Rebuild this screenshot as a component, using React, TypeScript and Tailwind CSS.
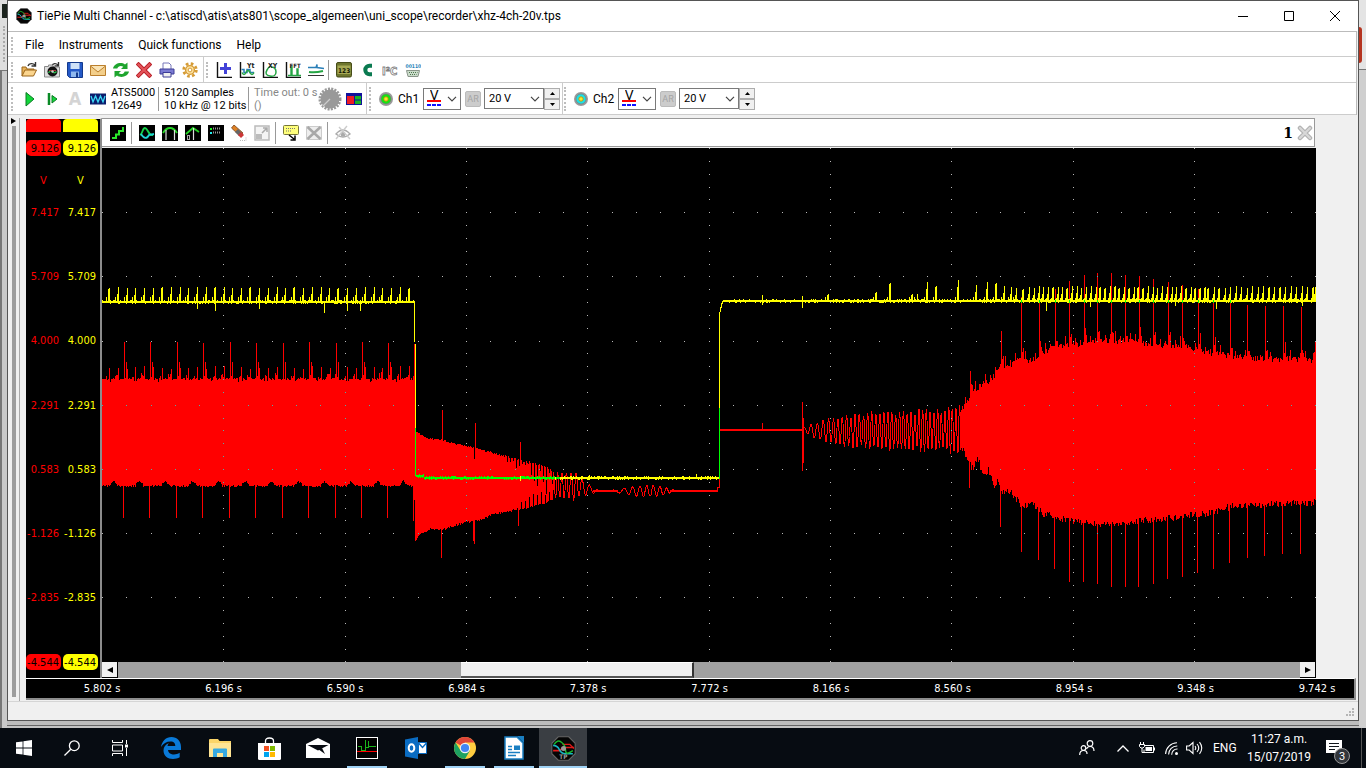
import type { ReactNode } from 'react';

/* ---------- waveform data ---------- */

const X0 = 102;
const X1 = 1316;
const Y0 = 148;
const Y1 = 662;

type Pt = [number, number];

const noise = (i: number) => {
  const v = Math.sin(i * 12.9898 + 4.1) * 43758.5453;
  return v - Math.floor(v);
};

const lerp = (pts: Pt[], x: number) => {
  if (x <= pts[0][0]) return pts[0][1];
  for (let i = 1; i < pts.length; i++) {
    if (x <= pts[i][0]) {
      const [ax, ay] = pts[i - 1];
      const [bx, by] = pts[i];
      return ay + ((by - ay) * (x - ax)) / (bx - ax);
    }
  }
  return pts[pts.length - 1][1];
};

const decayTop: Pt[] = [[415, 432], [427, 438], [442, 440], [455, 444], [467, 446], [482, 450], [500, 455], [520, 460], [533, 463], [548, 468], [554, 472]];
const decayBottom: Pt[] = [[415, 541], [420, 534], [430, 529], [442, 530], [453, 526], [467, 522], [480, 520], [493, 514], [510, 511], [520, 510], [533, 506], [547, 503], [554, 498]];
const burstTop: Pt[] = [[960, 413], [967, 402], [973, 393], [982, 385], [990, 382], [997, 372], [1003, 366], [1010, 367], [1020, 359], [1030, 362], [1040, 355], [1050, 350], [1060, 347], [1077, 345], [1100, 340], [1117, 342], [1140, 343], [1160, 347], [1180, 346], [1207, 354], [1233, 357], [1260, 360], [1287, 360], [1312, 361], [1315, 347]];
const burstBottom: Pt[] = [[960, 443], [967, 460], [973, 470], [977, 457], [983, 478], [988, 470], [995, 488], [998, 480], [1002, 493], [1006, 490], [1013, 496], [1023, 508], [1030, 503], [1043, 514], [1057, 518], [1073, 522], [1097, 524], [1113, 525], [1137, 521], [1167, 519], [1200, 515], [1233, 507], [1260, 505], [1315, 503]];

const burstUp: Pt[] = [[970, 371], [1001, 331], [1021, 297], [1039, 299], [1055, 289], [1069, 281], [1084, 275], [1097, 273], [1111, 273], [1125, 275], [1139, 276], [1153, 279], [1168, 282], [1182, 285], [1198, 289], [1213, 295], [1230, 298], [1247, 305], [1265, 306], [1283, 306], [1301, 307]];
const burstDown: Pt[] = [[969, 488], [1000, 527], [1021, 552], [1038, 560], [1054, 569], [1069, 582], [1083, 582], [1097, 584], [1111, 587], [1125, 587], [1138, 587], [1153, 584], [1167, 579], [1182, 577], [1197, 573], [1213, 569], [1229, 563], [1247, 558], [1264, 556], [1282, 554], [1300, 554]];

const top = new Map<number, number>();
const bottom = new Map<number, number>();

for (let x = X0; x < 415; x++) {
  const big = (((x - 123.5) % 26.45) + 26.45) % 26.45;
  const small = (((x - 108.5) % 8.82) + 8.82) % 8.82;
  let t = 378 + Math.round(noise(x) * 2);
  let b = 485 + Math.round(noise(x + 700) * 2);
  if (big > 12 && big < 19) b -= 5 - Math.round(Math.abs(big - 15.5));
  if (small < 1) t = 366 + Math.round(noise(x + 90) * 3);
  else if (small > 5.8) t -= Math.round(noise(x + 31) * 6);
  if (big > 8 && big < 13 && small >= 1) t += 2;
  if (big < 1) t = 342 + Math.round(noise(x + 5));
  else if (big >= 2 && big < 3) t = 362;
  if (big >= 25.4) b = 518;
  top.set(x, t);
  bottom.set(x, b);
}
top.set(413, 376);
bottom.set(413, 521);
top.set(414, 344);
bottom.set(414, 500);

for (let x = 415; x < 554; x++) {
  let t = lerp(decayTop, x) + noise(x) * 2 - 1;
  let b = lerp(decayBottom, x) + noise(x + 40) * 2 - 1;
  if (x > 500 && x % 3 === 0) t += noise(x + 3) * (x - 496) * 0.6;
  if (x > 505 && x % 4 === 1) b -= noise(x + 9) * (x - 500) * 0.5;
  top.set(x, Math.round(t));
  bottom.set(x, Math.round(b));
}
top.set(442, 410);
bottom.set(441, 558);
top.set(474, 459);
top.set(475, 423);
bottom.set(473, 541);
bottom.set(474, 544);
top.set(520, 442);
bottom.set(518, 526);

const upSpikes = new Map(burstUp);
const downSpikes = new Map(burstDown);
for (let x = 961; x < X1; x++) {
  const near = burstUp.some(([s]) => x - s > 0 && x - s < 3);
  const pulse = x % 5 === 0 ? 3 + noise(x + 8) * 10 : noise(x) * 6;
  const t = lerp(burstTop, x) - pulse - (near ? 8 : 0) + 2;
  const b = lerp(burstBottom, x) + noise(x + 300) * 7 - 4;
  top.set(x, Math.round(upSpikes.get(x) ?? t));
  bottom.set(x, Math.round(downSpikes.get(x) ?? b));
}

const redFill = [...top.keys()].map((x) => `M${x + 0.5} ${top.get(x)}V${bottom.get(x)}`).join('');

const chirp = (from: number, to: number, step: number, centre: Pt[], amp: Pt[], period: Pt[], wobble: number) => {
  let phase = 0;
  let d = '';
  for (let x = from; x <= to; x += step) {
    phase += (2 * Math.PI * step) / lerp(period, x);
    const jitter = 1 - wobble + noise(Math.floor(x / 3)) * wobble * 2;
    const y = lerp(centre, x) - Math.sin(phase) * lerp(amp, x) * jitter;
    d += `${d ? 'L' : 'M'}${x} ${y.toFixed(1)}`;
  }
  return d;
};

const decayTail = chirp(553, 598, 0.5, [[553, 485], [580, 486], [590, 490]], [[553, 14], [576, 13], [584, 7], [592, 4], [598, 0.5]], [[553, 4], [575, 5], [598, 10]], 0.1);
const ripple = chirp(610, 676, 0.5, [[598, 491], [719, 491]], [[610, 0.5], [618, 2], [630, 4], [640, 5.5], [656, 5.5], [664, 4], [676, 0.6]], [[610, 14], [630, 8], [645, 6.6]], 0.1);
const rise = 'M717.5 491V487H719.5V430.5H802';
const oscillation = chirp(803, 961, 0.5, [[803, 430], [836, 431], [961, 430]], [[803, 2], [810, 5], [820, 9], [836, 13], [870, 17], [900, 18], [943, 21], [961, 22]], [[803, 7], [820, 6], [836, 4.4], [880, 4], [961, 3.6]], 0.18);

const yellowPeaks: Pt[] = [[828, 294], [876, 292], [890, 283], [912, 294], [917, 294], [927, 282], [936, 286], [958, 280], [976, 285], [987, 282], [996, 283], [1004, 286], [1011, 287], [1016, 288], [1023, 289]];
for (let p = 109.5; p < 412; p += 8.82) yellowPeaks.push([Math.floor(p), 287 + Math.round(noise(p))]);
for (let p = 1029; p < 1207; p += 4.75) yellowPeaks.push([Math.round(p), 286 + Math.round(noise(p) * 2)]);
for (let p = 1208; p < X1; p += 5.5) yellowPeaks.push([Math.round(p), 286 + Math.round(noise(p) * 2)]);
yellowPeaks.push([1315, 287]);

const peakPath = ([x, y]: Pt) => {
  const shoulder = noise(x) > 0.75 ? 1 : 7;
  const foot = x < 1023 ? `M${x - 2.5} 297V301` : `M${x - 1.5} 298V301`;
  return `M${x + 0.5} ${y}V301M${x - 0.5} ${y + shoulder}V301${foot}`;
};

const flatTrace = (from: number, to: number, y: number, amount: number) => {
  let d = '';
  for (let x = from; x < to; x++) {
    const up = noise(x * 3) > 0.72 ? amount : 0;
    const down = noise(x * 7) > 0.75 ? amount : 0;
    d += `M${x + 0.5} ${y - 1 - up}V${y + 1 + down}`;
  }
  return d;
};

const yellowTrace =
  flatTrace(102, 415, 302, 1) +
  flatTrace(724, 1316, 301, 1) +
  yellowPeaks.map(peakPath).join('') +
  [[197, 309], [215, 311], [259, 309], [324, 313], [347, 311], [360, 311], [762, 305], [802, 308], [1046, 311], [1090, 307], [1175, 306], [1216, 309], [1302, 306]]
    .map(([x, y]) => `M${x + 0.5} 301V${y}`)
    .join('') +
  'M762.5 295V302M802.5 296V302M414.5 301V342M415.5 344V428M719.5 408V312M720.5 312V307M721.5 308V303M722.5 304V301M723.5 302V300' +
  flatTrace(540, 719, 478, 1) +
  'M589.5 475V480M696.5 474V479';
const greenTrace = flatTrace(416, 424, 476, 1) + flatTrace(424, 560, 478, 1) + 'M415.5 428V476M719.5 408V479';
const crossings = burstUp.filter(([, y]) => y < 300).map(([x]) => `M${x + 0.5} 300V303`).join('');

const dots: { x: number; y: number; hot: boolean }[] = [];
const addDot = (x: number, y: number) => {
  const t = top.get(x);
  const b = bottom.get(x);
  dots.push({ x, y, hot: t !== undefined && b !== undefined && y > t && y < b });
};
for (let r = 1; r < 8; r++) for (let c = 0; c <= 50; c++) addDot(Math.min(X1 - 1, Math.round(X0 + c * 24.27)), Math.round(Y0 + r * 64.2));
for (let c = 1; c < 10; c++) for (let r = 0; r <= 40; r++) addDot(Math.round(X0 + c * 121.35), Math.min(Y1 - 1, Math.round(Y0 + r * 12.84)));
const dotPath = (hot: boolean) => dots.filter((d) => d.hot === hot).map((d) => `M${d.x} ${d.y}h1v1h-1z`).join('');

function Plot() {
  return (
    <svg role="img" aria-label="Recorded signals" viewBox="102 148 1214 514" preserveAspectRatio="none" className="min-h-0 w-full flex-1 bg-black" fill="none" shapeRendering="crispEdges">
      <path d={redFill} stroke="#f00" />
      <path d={decayTail + ripple} stroke="#f00" />
      <path d={rise} stroke="#f00" />
      <path d="M720 430H802M593 491H618M670 491H718" stroke="#f00" strokeWidth="2" />
      <path d="M762.5 423V430M802.5 402V471M803.5 418V463" stroke="#f00" />
      <path d={oscillation} stroke="#f00" />
      <path d={yellowTrace} stroke="#ff0" />
      <path d={greenTrace + crossings} stroke="#0f0" />
      <path d="M520.5 476V481M555.5 477V480M562.5 477V480" stroke="#ff0" />
      <path d={dotPath(false)} fill="#b8b8b8" />
      <path d={dotPath(true)} fill="#4fb0a8" />
    </svg>
  );
}

/* ---------- icons ---------- */

function Icon({ children, size = 16, label }: { children: ReactNode; size?: number; label?: string }) {
  return (
    <svg width={size} height={size} viewBox="0 0 16 16" fill="none" aria-label={label} className="shrink-0">
      {children}
    </svg>
  );
}

const T = ({ x, y, s, f, children }: { x: number; y: number; s: number; f: string; children: string }) => (
  <text x={x} y={y} fontSize={s} fill={f} fontWeight="700" fontFamily='"DejaVu Sans Condensed", "DejaVu Sans", sans-serif'>
    {children}
  </text>
);

const Tp = ({ size = 16, caption = '' }: { size?: number; caption?: string }) => (
  <svg width={size} height={size} viewBox="0 0 24 24" fill="none" className="shrink-0">
    <path d="M7 .8h10L23.2 7v10L17 23.2H7L.8 17V7z" fill="#050505" stroke="#666" />
    <path d="M2 14h6l4-3h10" stroke="#e01818" strokeWidth="1.6" />
    <path d="M11 8h7l4 4" stroke="#e01818" strokeWidth="1.3" />
    <path d="M2 9q4 0 6 4t6 4h7" stroke="#19b6c4" strokeWidth="1.5" />
    <path d="M3 8q3-5 7-2t4 8 7 0" stroke="#1bb52c" strokeWidth="1.4" />
    <circle cx="12" cy="12" r="2.4" fill="#999" />
    {caption && <T x={8} y={22.5} s={6} f="#999">{caption}</T>}
  </svg>
);

const axes = <path d="M1.5 0V15.5H16" stroke="#111" strokeWidth="1.4" />;

const fileIcons: [string, ReactNode][] = [
  ['Open', <><path d="M7 4c1-3 5-3 7-1M14.5 0v4h-4" stroke="#333" strokeWidth="1.4" /><path d="M1 14V5h4l1 2h7v2" fill="#e9b45a" stroke="#9a6418" /><path d="M1 14l3-6h11.500l-3 6z" fill="#fbd58e" stroke="#9a6418" /></>],
  ['Snapshot', <><path d="M8 4c1-3 4-3 6-1M14.500 0v4h-4" stroke="#333" strokeWidth="1.4" /><path d="M.5 4.500h4v-1.500h4l1 2h6v10H.5z" fill="#ddd" stroke="#888" /><circle cx="8.500" cy="9.500" r="5" fill="#111" /><path d="M4.500 11q2-4 4-1.500t4 0" stroke="#2ab54a" strokeWidth="1.3" /><path d="M5 8.500h7" stroke="#a33" /><circle cx="8.500" cy="9.500" r="1.200" fill="#ccc" /></>],
  ['Save', <><path d="M.5.5h15v15h-13l-2-2z" fill="#2459c7" stroke="#143a8c" /><path d="M3.500 1h9v6h-9z" fill="#cfe2f8" /><path d="M4 15V9.500h8V15" fill="#8fb8ee" /><path d="M9 10.500h2V15H9z" fill="#133a8d" /></>],
  ['Mail', <><path d="M.5 3.500h15v10H.5z" fill="#f3cf8b" stroke="#bb7f2d" /><path d="M.5 4l7.500 6 7.500-6" stroke="#bb7f2d" fill="#fae4b5" /></>],
  ['Refresh', <><path d="M0 6.500C1 1.500 8-.5 12 2.500L14.500.500V7H8l2.300-2.300C8 3.200 5 4 4.300 6.500zM16 9.500c-1 5-8 7-12 4L1.500 15.500V9H8l-2.300 2.300c2.300 1.500 5.300.7 6-1.800z" fill="#1ea52e" /></>],
  ['Delete', <><path d="M2.500 2.500l11 11M13.500 2.500l-11 11" stroke="#b81e26" strokeWidth="4" strokeLinecap="square" /><path d="M2.500 2.500l11 11M13.500 2.500l-11 11" stroke="#e4545a" strokeWidth="2.200" strokeLinecap="square" /></>],
  ['Print', <><path d="M4 7V1h6l2 2v4" fill="#fff" stroke="#7878ba" /><path d="M1 7h14v5H1z" fill="#7a7ad2" stroke="#3c3c96" /><path d="M4 10.500h8v4.500H4z" fill="#eee" stroke="#3c3c96" /></>],
  ['Settings', <><circle cx="8" cy="8" r="6.300" stroke="#d59b35" strokeWidth="2.800" strokeDasharray="2.600 2.350" /><circle cx="8" cy="8" r="4.400" fill="#ffe3a0" stroke="#d59b35" strokeWidth="1.400" /><circle cx="8" cy="8" r="1.900" fill="#fff" stroke="#d59b35" /></>],
];

const graphIcons: [string, ReactNode][] = [
  ['New graph', <>{axes}<path d="M9.500 1v11M4 6.500h11" stroke="#4343d8" strokeWidth="3" /></>],
  ['Yt graph', <>{axes}<path d="M2.500 7.500H5v3h3v-3h3v3h4" stroke="#2a7fb8" strokeWidth="1.500" /><path d="M3 10.500q2 4 4 0t4 0 4 0" stroke="#25a544" strokeWidth="1.600" /><T x={8} y={5.5} s={7} f="#222">Yt</T></>],
  ['XY graph', <>{axes}<path d="M9 5q5 0 5 5t-6 4-3-6 4-3" stroke="#25a544" strokeWidth="1.500" /><T x={6} y={5.5} s={7} f="#222">XY</T></>],
  ['FFT graph', <>{axes}<path d="M3 13.500h3V5h1v8.500h5V7h1v6.500h3" stroke="#25a544" strokeWidth="1.400" /><T x={4.5} y={5.5} s={6} f="#222">FFT</T></>],
  ['Trend', <><path d="M0 5.500h8l1-3v3l7 1" stroke="#2a7fb8" strokeWidth="1.500" /><path d="M1 10q6 1 14-1" stroke="#25a544" strokeWidth="2" /><path d="M0 13.500h16" stroke="#333" /></>],
];

const toolIcons: [string, ReactNode][] = [
  ['Meter', <><rect x=".5" y=".5" width="15" height="14.500" rx="1.500" fill="#6e762e" stroke="#464c18" /><path d="M1.500 3.500h13v8.500h-13z" fill="#a7aa55" /><T x={2} y={10.5} s={6.5} f="#171a05">123</T></>],
  ['CAN', <path d="M13 3.800h-2.500a4.200 4.200 0 0 0 0 8.400H13" stroke="#0a7a50" strokeWidth="4" />],
  ['I2C', <text x="0" y="13" fontSize="11" fill="#fff" stroke="#808080" strokeWidth=".8" fontWeight="700" fontFamily='"DejaVu Sans Condensed", sans-serif'>I²C</text>],
  ['Serial', <><T x={0.5} y={5.5} s={5} f="#2a86bb">00110</T><path d="M1.500 8.500h13l-1.500 6H3z" fill="#cbdccb" stroke="#8a958a" /><path d="M4 10.500h8.500M5 12.500h6.500" stroke="#4c764c" strokeDasharray="1 1" /></>],
];

const plotTools: { name: string; node: ReactNode; sep?: boolean }[] = [
  { name: 'Step', sep: true, node: <><rect width="16" height="16" fill="#000" /><path d="M2 13h4v-3.500h3V6h4V2" stroke="#2be52b" strokeWidth="2" /></> },
  { name: 'Interpolate', node: <><rect width="16" height="16" fill="#000" /><path d="M1 10c3-1 2-7 5-7s3 8 8 7" stroke="#16d24a" strokeWidth="1.800" /><path d="M2 9c3 5 6 5 8 1l5-1" stroke="#20d4d4" strokeWidth="1.800" /></> },
  { name: 'Window', node: <><rect width="16" height="16" fill="#000" /><path d="M1 8q3-5 7-5t7 5" stroke="#25d525" strokeWidth="1.800" /><path d="M4 5v10M12.500 5v10" stroke="#ddd" strokeWidth="1.200" /></> },
  { name: 'Cursor', node: <><rect width="16" height="16" fill="#000" /><path d="M1 9l7-6 6 4" stroke="#25d525" strokeWidth="1.800" /><path d="M8.500 3v12" stroke="#ddd" strokeWidth="1.200" /><rect x="2.500" y="10.500" width="2" height="4" stroke="#aaa" /></> },
  { name: 'Legend', node: <><rect width="16" height="16" fill="#000" /><path d="M2 3h2v2H2z" fill="#2e2" /><path d="M2 7h2v2H2z" fill="#2ee" /><path d="M5 3.500h8M5 7.500h8" stroke="#999" strokeWidth="2" strokeDasharray="1 1" /></> },
  { name: 'Erase', node: <><path d="M3 0l9 8-3 3L.5 3z" fill="#df8123" stroke="#74421a" strokeWidth=".8" /><path d="M7 4l4 4-3 3-4-4z" fill="#666" /><path d="M10 7l3 3-3 3-3-3z" fill="#cc3636" /><path d="M9 15.500h6v-4" stroke="#bbb" strokeDasharray="1 1" /></> },
  { name: 'Resize', sep: true, node: <><path d="M1 1h14v14H1z" fill="#f4f4f4" stroke="#bbb" strokeWidth="1.500" /><path d="M2 9h6v5H2z" fill="#bbb" /><path d="M8 8l4.500-4.500M9 3h4v4" stroke="#aaa" strokeWidth="1.500" /></> },
  { name: 'Comment', node: <><rect x=".5" y=".5" width="15" height="9" rx="1" fill="#ffff7a" stroke="#77773a" /><path d="M3 3.500h10M3 6h5" stroke="#777" strokeDasharray="1 1" /><path d="M6 10l5 4M12 10.500V15H7.500" stroke="#000" strokeWidth="1.500" /></> },
  { name: 'Clear', sep: true, node: <><path d="M.5 1.500h15v13H.5z" fill="#eee" stroke="#ccc" /><path d="M1.500 2l13 12M14.500 2l-13 12" stroke="#a8a8a8" strokeWidth="2.500" /></> },
  { name: 'Visibility', node: <><path d="M1 9q7-8 14 0-7 6-14 0z" stroke="#aaa" strokeWidth="1.400" /><circle cx="8" cy="9" r="2.500" fill="#aaa" /><path d="M1 14L12 1M4 2l11 12" stroke="#ccc" strokeWidth="1.400" /></> },
];

/* ---------- small pieces ---------- */

const Grip = ({ className = 'h-4' }: { className?: string }) => (
  <span className={`w-0 shrink-0 border-l-2 border-dotted border-[#bdbdbd] ${className}`} />
);

const IconRow = ({ items }: { items: [string, ReactNode][] }) => (
  <div className="flex items-center gap-[7px]">
    {items.map(([name, node]) => (
      <button key={name} aria-label={name}>
        <Icon>{node}</Icon>
      </button>
    ))}
  </div>
);

const Chevron = () => (
  <svg width="10" height="6" viewBox="0 0 10 6" fill="none" className="pointer-events-none absolute top-2 right-1">
    <path d="M1 .8l4 4 4-4" stroke="#444" strokeWidth="1.200" />
  </svg>
);

function Channel({ name, led }: { name: string; led: string }) {
  return (
    <div className="flex items-center">
      <Icon label={`${name} status`}>
        <circle cx="8" cy="8" r="7" fill="#999" />
        <circle cx="8" cy="8" r="5" fill={led} stroke="#777" strokeWidth=".6" />
        <circle cx="8" cy="8" r="2.200" fill="#ee3" stroke="#c80" strokeWidth=".8" />
      </Icon>
      <span className="ml-1 w-[25px] text-xs">{name}</span>
      <div className="relative">
        <select aria-label={`${name} coupling`} className='block h-[22px] w-[38px] appearance-none border border-[#7a7a7a] bg-white pb-2 pl-1.5 font-["Noto_Sans"] text-sm leading-3 text-black'>
          <option>V</option>
        </select>
        <svg width="14" height="6" viewBox="0 0 14 6" className="pointer-events-none absolute bottom-1 left-1" shapeRendering="crispEdges">
          <path d="M0 1h14" stroke="#f00" strokeWidth="2" />
          <path d="M0 5h14" stroke="#11f" strokeWidth="2" strokeDasharray="4 1" />
        </svg>
        <Chevron />
      </div>
      <button aria-label={`${name} auto range`} className="mx-1 h-4 w-4 rounded-xs border border-[#bbb] bg-[#ccc] text-[9px] leading-3 text-[#a4a4a4]">
        <span className="flex justify-center">AR</span>
      </button>
      <div className="relative ml-[-1px]">
        <select aria-label={`${name} range`} className="block h-[21px] w-[60px] appearance-none border border-[#7a7a7a] bg-white pl-1 text-[11px] text-black">
          <option>20 V</option>
        </select>
        <Chevron />
      </div>
      <div className="flex flex-col">
        {['up', 'down'].map((dir) => (
          <button key={dir} aria-label={`${name} range ${dir}`} className="flex h-[11px] w-4 items-center justify-center border border-[#adadad] bg-[#f0f0f0]">
            <svg width="5" height="3" viewBox="0 0 5 3">
              <path d={dir === 'up' ? 'M0 3L2.500 0 5 3z' : 'M0 0h5L2.500 3z'} fill="#000" />
            </svg>
          </button>
        ))}
      </div>
    </div>
  );
}

const levels = ['9.126', '7.417', '5.709', '4.000', '2.291', '0.583', '-1.126', '-2.835', '-4.544'];
const times = ['5.802', '6.196', '6.590', '6.984', '7.378', '7.772', '8.166', '8.560', '8.954', '9.348', '9.742'];

function Scale({ head, text, pill }: { head: string; text: string; pill: string }) {
  return (
    <div className="flex flex-1 flex-col">
      <div className={`h-[13px] rounded-t-sm ${head}`} />
      {levels.flatMap((v, i) => {
        const edge = i === 0 || i === levels.length - 1;
        const row = (
          <div key={v} className={`flex flex-1 items-center justify-end ${text}`}>
            <span className={edge ? `flex h-4 w-full items-center justify-end rounded-[5px] pr-0.5 ${pill}` : 'pr-0.5'}>{v}</span>
          </div>
        );
        const gap = (
          <div key={`${v}-gap`} className={`flex flex-1 items-center justify-center ${text}`}>
            {i === 0 ? 'V' : ''}
          </div>
        );
        return i === levels.length - 1 ? [row] : [row, gap];
      })}
    </div>
  );
}

/* ---------- task bar ---------- */

const taskItems: { name: string; node: ReactNode; open?: boolean; active?: boolean }[] = [
  { name: 'Edge', node: <svg width="20" height="22" viewBox="0 0 20 22"><path d="M0 10C1 4 5 0 10.500 0 16 0 20 4 20 10v3H7c.3 3 3 4.500 6 4.500 2 0 4-.6 5.700-1.700v4.500C17 21.500 14.500 22 12 22 6.500 22 2.500 18.500 2.500 13.500 2.500 10 4.500 7.500 8 6 7 7 6.500 8.500 6.500 9h7.800C14.300 6.500 13 4.500 9.500 4.500 5.500 4.500 2 6.500 0 10z" fill="#0a7ad8" /></svg> },
  { name: 'File Explorer', node: <svg width="22" height="18" viewBox="0 0 22 18"><path d="M0 1q0-1 1-1h8l1.500 2H22v16H0z" fill="#fbd568" /><path d="M0 4h22v14H0z" fill="#ffe594" /><path d="M4 10.500q0-1 1-1h12q1 0 1 1V18h-4v-4H8v4H4z" fill="#36a9e1" /></svg> },
  { name: 'Store', node: <svg width="23" height="23" viewBox="0 0 23 23"><path d="M7.500 7V4q0-3 4-3t4 3v3" fill="none" stroke="#fff" strokeWidth="1.300" /><path d="M0 6h23v15.500q0 1.500-1.500 1.500h-20Q0 23 0 21.500z" fill="#fff" /><path d="M6 9h5v5H6z" fill="#f25022" /><path d="M12 9h5v5h-5z" fill="#7fba00" /><path d="M6 15h5v5H6z" fill="#00a4ef" /><path d="M12 15h5v5h-5z" fill="#ffb900" /></svg> },
  { name: 'Mail', node: <svg width="24" height="20" viewBox="0 0 24 20"><path d="M0 6L12 0l12 6v14H0z" fill="#fff" /><path d="M1.500 7h21L12 12.500z" fill="#080c12" /><path d="M12 11l7 5-3-6z" fill="#080c12" /></svg> },
  { name: 'Scope', open: true, node: <svg width="22" height="22" viewBox="0 0 22 22" shapeRendering="crispEdges"><path d="M.5.5h21v21H.5z" fill="#000" stroke="#fff" /><path d="M1 14.500h20" stroke="#f00" /><path d="M2 9.500h3.500v3.500h4V3M12.500 4v6.500h-3M12 9.500h8" stroke="#1bb51b" fill="none" /></svg> },
  { name: 'Outlook', node: <svg width="22" height="22" viewBox="0 0 22 22"><path d="M0 2.500L13 0v22L0 19.500z" fill="#0a6cc2" /><ellipse cx="6.500" cy="11" rx="2.800" ry="3.700" fill="none" stroke="#fff" strokeWidth="2" /><path d="M13.500 5.500h8v11h-8z" fill="#fff" stroke="#0a6cc2" /><path d="M13.500 6l4 4.500 4-4.500" fill="none" stroke="#0a6cc2" strokeWidth="1.400" /></svg> },
  { name: 'Chrome', open: true, node: <svg width="22" height="22" viewBox="0 0 22 22"><circle cx="11" cy="11" r="11" fill="#ffcd40" /><path d="M11 11L1.500 5.500A11 11 0 0 1 20.500 5.500H11z" fill="#e0473a" /><path d="M1.500 5.500A11 11 0 0 0 11 22l4.800-8.300L11 11 6.500 13.500z" fill="#1da261" /><circle cx="11" cy="11" r="5.200" fill="#f2f2f2" /><circle cx="11" cy="11" r="4.100" fill="#4285f4" /></svg> },
  { name: 'Writer', open: true, node: <svg width="20" height="24" viewBox="0 0 20 24"><path d="M1 1h12l6 6v16H1z" fill="#fff" stroke="#1a7fc2" strokeWidth="1.500" /><path d="M13 0h7v7z" fill="#1a7fc2" /><path d="M4 10.500h4M4 13.500h4M4 16.500h12M4 19.500h8" stroke="#1a7fc2" strokeWidth="1.500" /><path d="M10 9.500h6v4.500h-6z" fill="#1a7fc2" /></svg> },
  { name: 'TiePie', open: true, active: true, node: <Tp size={25} caption="TP" /> },
];

function Taskbar() {
  return (
    <footer className="flex h-10 shrink-0 items-stretch bg-[#070c12] text-white">
      <button aria-label="Start" className="flex w-12 items-center justify-center">
        <svg width="16" height="16" viewBox="0 0 16 16" fill="#fff"><path d="M0 2.300L6.600 1.400V7.600H0zM7.400 1.300L16 0v7.600H7.400zM0 8.400h6.600v6.200L0 13.700zM7.400 8.400H16V16l-8.600-1.300z" /></svg>
      </button>
      <button aria-label="Search" className="flex w-12 items-center justify-center">
        <svg width="16" height="16" viewBox="0 0 16 16" fill="none" stroke="#fff" strokeWidth="1.300"><circle cx="10.300" cy="5.700" r="4.900" /><path d="M6.800 9.200L.5 15.500" /></svg>
      </button>
      <button aria-label="Task view" className="flex w-12 items-center justify-center">
        <svg width="16" height="16" viewBox="0 0 16 16" fill="none" stroke="#fff"><path d="M.5 0v2.500h10V0M.5 16v-2.500h10V16M.5 5h10v6H.5zM14.500 0v4M14.500 8v8" /><path d="M13 4.500h3v3h-3z" fill="#fff" stroke="none" /></svg>
      </button>
      <nav className="ml-[3px] flex gap-px">
        {taskItems.map((t) => (
          <button key={t.name} aria-label={t.name} className={`flex w-12 flex-col items-center ${t.active ? 'bg-[#3a3e43]' : ''}`}>
            <span className="flex flex-1 items-center pt-0.5">{t.node}</span>
            <span className={`h-0.5 ${t.active ? 'w-full' : 'w-10'} ${t.open ? 'bg-[#9fd2f5]' : ''}`} />
          </button>
        ))}
      </nav>
      <div className="ml-auto flex items-center">
        <svg width="16" height="16" viewBox="0 0 16 16" fill="none" stroke="#fff" strokeWidth="1.200"><circle cx="11" cy="3.500" r="2.800" /><circle cx="4.500" cy="8" r="2.300" /><path d="M.7 15q0-4.500 3.800-4.500T8 14M7.500 9q1-2.500 3.500-2.500 4 0 4 4.500" /></svg>
        <svg width="12" height="7" viewBox="0 0 12 7" fill="none" stroke="#fff" strokeWidth="1.300" className="ml-[22px]"><path d="M.5 6.500L6 1l5.500 5.500" /></svg>
        <svg width="16" height="12" viewBox="0 0 16 12" fill="none" stroke="#fff" className="ml-2.5"><path d="M5 3.500h9.500v7H5v-3" /><path d="M6.500 5h6.500v4H6.500z" fill="#fff" stroke="none" /><path d="M15.500 5.500v3M1.500 0v2M4.500 0v2M.5 2.500h5v2l-1.500 1.500h-2L.5 4.500zM3 6v4.500h2" /></svg>
        <svg width="13" height="13" viewBox="0 0 13 13" fill="none" stroke="#fff" strokeWidth="1.100" className="ml-2.5"><path d="M.6 12A11.500 11.500 0 0 1 12 .8M3.600 12.500A8.500 8.500 0 0 1 12.300 4M6.700 12.800A5.500 5.500 0 0 1 12.500 7" /><circle cx="11.500" cy="11.500" r="1.500" fill="#fff" stroke="none" /></svg>
        <svg width="17" height="14" viewBox="0 0 17 14" fill="none" stroke="#fff" strokeWidth="1.100" className="ml-2"><path d="M.6 5v4h2.600L7 12.500v-11L3.200 5zM9 5q1.500 2 0 4M11 3q3.500 4 0 8M13.500 1.200q4.500 5.800 0 11.600" /></svg>
        <span className="ml-2.5 w-6 text-xs">ENG</span>
        <div className="ml-2.5 flex w-16 flex-col items-center text-xs leading-[18px] whitespace-nowrap">
          <span>11:27 a.m.</span>
          <span>15/07/2019</span>
        </div>
        <div className="relative ml-[15px] h-4 w-4">
          <svg width="16" height="17" viewBox="0 0 16 17"><path d="M0 0h16v13h-4l-3 3.500V13H0z" fill="#fff" /><path d="M3 3.500h10M3 6.500h10M3 9.500h6" stroke="#10151b" /></svg>
          <span className="absolute top-2 left-2 flex h-4 w-4 items-center justify-center rounded-full border border-[#999] bg-[#32363b] text-[11px] leading-none">3</span>
        </div>
        <span className="ml-[19px] h-10 w-[5px] border-l border-[#555]" />
      </div>
    </footer>
  );
}

/* ---------- page ---------- */

export default function App() {
  return (
    <div className='flex h-screen flex-col bg-[#c4c4c4] font-["Roboto","Open_Sans",sans-serif] text-black'>
      <div className="flex min-h-0 flex-1">
        <div className="flex w-[7px] shrink-0 flex-col">
          <div className="flex h-[70px] flex-col items-end bg-[#dedede] pt-1">
            <span className="h-3.5 w-[5px] bg-[#1c241e]" />
            <span className="mt-2 mr-0.5 h-9 border-l-2 border-dotted border-[#aaa]" />
          </div>
          <div className="flex-1 border-t border-l-2 border-[#777] bg-[#c9c9c9]" />
        </div>

        <div className="flex min-w-0 flex-1 flex-col">
          <main className="flex min-h-0 flex-1 flex-col border border-[#555] bg-[#f0f0f0]">
            <header className="flex h-[30px] shrink-0 items-center bg-white pl-2">
              <Tp />
              <h1 className="ml-[5px] text-xs">TiePie Multi Channel - c:\atiscd\atis\ats801\scope_algemeen\uni_scope\recorder\xhz-4ch-20v.tps</h1>
              <div className="ml-auto flex">
                {['M3 8.500h10', 'M3.500 3.500h9v9h-9z', 'M3 3l10 10M13 3L3 13'].map((d, i) => (
                  <button key={d} aria-label={['Minimize', 'Maximize', 'Close'][i]} className="flex w-[46px] justify-center">
                    <Icon>
                      <path d={d} stroke="#000" />
                    </Icon>
                  </button>
                ))}
              </div>
            </header>

            <div className="mr-px shrink-0 border-t border-r border-[#bbb] bg-white">
              <nav className="flex h-[25px] items-center gap-[15px] border-b border-[#ccc] pt-px pl-[3px] text-xs">
                <div className="flex items-center gap-3">
                  <Grip />
                  <button>File</button>
                </div>
                <button>Instruments</button>
                <button>Quick functions</button>
                <button>Help</button>
              </nav>
              <div className="flex h-[26px] items-center border-b border-[#ccc] pl-[3px]">
                <Grip />
                <span className="w-2" />
                <IconRow items={fileIcons} />
                <span className="ml-[5px] h-full w-[3px] border-l border-[#ccc]" />
                <Grip />
                <span className="w-2" />
                <IconRow items={graphIcons} />
                <span className="mr-[7px] ml-1 h-5 w-px bg-[#999]" />
                <IconRow items={toolIcons} />
              </div>
              <div className="flex h-8 items-center border-b border-[#ccc] pl-[3px] text-[11px] leading-[13px] whitespace-nowrap">
                <Grip className="h-6" />
                <div className="ml-2 flex items-center gap-[7px]">
                  <button aria-label="Start"><Icon><path d="M5 1.500l8 6.500-8 7z" fill="#12d63a" stroke="#0a7a22" /></Icon></button>
                  <button aria-label="One shot"><Icon><path d="M5 2v12" stroke="#0a8a26" strokeWidth="2.500" /><path d="M8 4.500l5 3.500-5 4z" fill="#12d63a" stroke="#0a7a22" /></Icon></button>
                  <span className='flex h-4 w-4 items-center justify-center font-["DejaVu_Sans_Condensed","DejaVu_Sans",sans-serif] text-lg leading-5 font-bold text-[#d4d4d4]'>A</span>
                  <button aria-label="Instrument"><Icon><rect y="2.500" width="16" height="11" fill="#0c1c6c" /><path d="M1 5l2 6 2.500-6L8 11l2.500-6L13 11l2-6" stroke="#3cd7f5" strokeWidth="1.300" /></Icon></button>
                </div>
                <p className="ml-[5px] w-[47px]">ATS5000<br />12649</p>
                <span className="h-6 w-px bg-[#999]" />
                <p className="ml-[5px] w-[84px]">5120 Samples<br />10 kHz @ 12 bits</p>
                <span className="h-6 w-px bg-[#999]" />
                <p className="ml-[5px] w-16 text-[#878787]">Time out: 0 s<br />()</p>
                <svg width="24" height="24" viewBox="0 0 24 24" fill="none"><circle cx="12" cy="12" r="9.500" fill="#999" /><circle cx="12" cy="12" r="10" stroke="#999" strokeWidth="3" strokeDasharray="2 1.200" /><path d="M5 19l7-7" stroke="#ccc" strokeWidth="1.300" /></svg>
                <svg width="16" height="12" viewBox="0 0 16 12" className="ml-1"><rect width="16" height="12" fill="#11129b" /><path d="M1 3h7v8H1z" fill="#ed1c24" /><path d="M9 3h6v3.500H9zM9 7.500h6V11H9z" fill="#19b424" /></svg>
                <span className="ml-1 h-full w-[3px] border-l border-[#ccc]" />
                <Grip className="h-6" />
                <span className="w-[7px]" />
                <Channel name="Ch1" led="#13e513" />
                <span className="ml-[2px] h-full w-[2px] border-l border-[#ccc]" />
                <Grip className="h-6" />
                <span className="w-[7px]" />
                <Channel name="Ch2" led="#19e3e8" />
              </div>
            </div>

            <div className="mt-[3px] flex min-h-0 flex-1">
              <aside className="flex w-3 shrink-0 flex-col items-center border-r border-[#aaa]">
                <svg width="5" height="6" viewBox="0 0 5 6"><path d="M0 0l5 3-5 3z" fill="#000" /></svg>
                <div className="mt-0.5 mb-1 w-1 flex-1 bg-[#9d9d9d]" />
              </aside>

              <section className="mr-0.5 mb-px ml-1.5 flex min-w-0 flex-1 flex-col">
                <div className="flex min-h-0 flex-1">
                  <div className='flex w-[76px] shrink-0 gap-0.5 border-t border-r-2 border-t-[#f0f0f0] border-r-[#8c8c8c] bg-black pr-0.5 font-["DejaVu_Sans_Condensed","Noto_Sans",sans-serif] text-[11px] leading-none'>
                    <Scale head="bg-[#f00]" text="text-[#f00]" pill="bg-[#f00] text-black" />
                    <Scale head="bg-[#ff0]" text="text-[#ff0]" pill="bg-[#ff0] text-black" />
                  </div>
                  <div className="flex min-w-0 flex-1 flex-col">
                    <div className="mr-px mb-px flex h-[29px] shrink-0 items-center border-t border-r border-b border-[#999] bg-white pl-2">
                      {plotTools.map((t) => (
                        <div key={t.name} className="flex items-center">
                          <button aria-label={t.name} className="mr-[7px]">
                            <Icon>{t.node}</Icon>
                          </button>
                          {t.sep && <span className="mr-[7px] -ml-0.5 h-[22px] w-px bg-[#999]" />}
                        </div>
                      ))}
                      <span className='ml-auto font-["DejaVu_Serif",serif] text-sm font-bold'>1</span>
                      <button aria-label="Close graph" className="ml-1 mr-px">
                        <Icon><path d="M3 3l10 10M13 3L3 13" stroke="#b2b2b2" strokeWidth="4.500" strokeLinecap="round" /><path d="M3 3l10 10M13 3L3 13" stroke="#d8d8d8" strokeWidth="2.200" strokeLinecap="round" /></Icon>
                      </button>
                    </div>
                    <Plot />
                    <div className="flex h-4 shrink-0 bg-[#a0a0a0]">
                      <button aria-label="Scroll left" className="flex w-4 items-center justify-center border-r border-b border-black bg-[#f0f0f0]">
                        <svg width="6" height="6" viewBox="0 0 6 6"><path d="M6 0v6L0 3z" fill="#000" /></svg>
                      </button>
                      <div className="flex flex-1">
                        <span className="w-[29%]" />
                        <span className="w-[19.700%] border-t border-r-2 border-b-2 border-t-white border-r-[#333] border-b-[#555] bg-[#f0f0f0]" />
                      </div>
                      <button aria-label="Scroll right" className="flex w-4 items-center justify-center border-r border-b border-black bg-[#f0f0f0]">
                        <svg width="6" height="6" viewBox="0 0 6 6"><path d="M0 0v6l6-3z" fill="#000" /></svg>
                      </button>
                    </div>
                  </div>
                  <div className="w-10 shrink-0" />
                </div>
                <div className='flex h-[22px] shrink-0 items-center justify-between border-t border-r-2 border-b-2 border-t-white border-r-[#8c8c8c] border-b-[#8c8c8c] bg-black pt-0.5 pr-[37px] pl-[76px] font-["DejaVu_Sans_Condensed","Noto_Sans",sans-serif] text-[11px] text-white'>
                  {times.map((t) => (
                    <span key={t} className="flex w-0 justify-center whitespace-nowrap">{t} s</span>
                  ))}
                </div>
              </section>
            </div>

            <div className="flex h-[19px] shrink-0 items-end justify-end border-t border-[#d5d5d5] p-1">
              <svg width="8" height="8" viewBox="0 0 8 8" fill="#b5b5b5"><path d="M6 0h2v2H6zM3 3h2v2H3zM6 3h2v2H6zM0 6h2v2H0zM3 6h2v2H3zM6 6h2v2H6z" /></svg>
            </div>
          </main>
          <div className="mb-0.5 h-[5px] shrink-0 border-b border-[#666] bg-[#bdbdbd]" />
        </div>

        <div className="flex w-[7px] shrink-0 flex-col">
          <div className="h-[70px] border-b border-[#777] bg-[#e4e4e4] pt-[27px]">
            <span className="block h-9 w-[3px] rounded-r-sm bg-[#b53420]" />
          </div>
          <div className="flex-1 bg-[#cfcfcf]" />
        </div>
      </div>
      <Taskbar />
    </div>
  );
}
